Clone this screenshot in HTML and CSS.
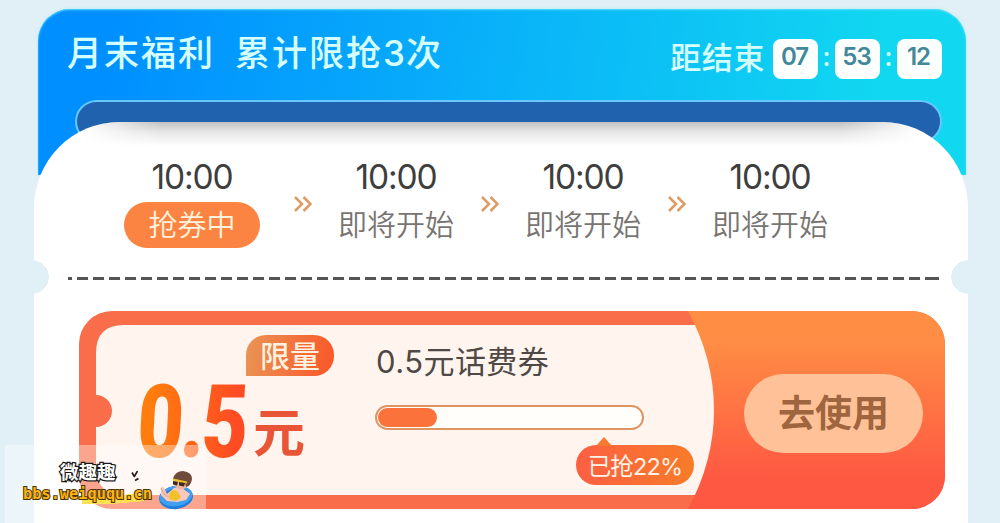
FILE: index.html
```html
<!DOCTYPE html>
<html lang="zh-CN">
<head>
<meta charset="utf-8">
<title>月末福利</title>
<link rel="stylesheet" href="styles.css">
</head>
<body>
<main class="promo">
  <header class="hero">
    <div class="hero-row">
      <h1 class="title"><span>月末福利</span><span>累计限抢<b class="num">3</b>次</span></h1>
      <div class="countdown">
        <span class="countdown-label">距结束</span>
        <span class="unit">07</span><span class="colon">:</span><span class="unit">53</span><span class="colon">:</span><span class="unit">12</span>
      </div>
    </div>
    <div class="slot"></div>
  </header>
  <section class="panel">
    <div class="sessions">
      <div class="session active"><time>10:00</time><span class="state">抢券中</span></div>
      <svg class="chevrons" viewBox="0 0 18 16"><path d="M1 1l7 7-7 7M9.500 1l7 7-7 7"/></svg>
      <div class="session"><time>10:00</time><span class="state">即将开始</span></div>
      <svg class="chevrons" viewBox="0 0 18 16"><path d="M1 1l7 7-7 7M9.500 1l7 7-7 7"/></svg>
      <div class="session"><time>10:00</time><span class="state">即将开始</span></div>
      <svg class="chevrons" viewBox="0 0 18 16"><path d="M1 1l7 7-7 7M9.500 1l7 7-7 7"/></svg>
      <div class="session"><time>10:00</time><span class="state">即将开始</span></div>
    </div>
    <div class="tear"></div>
    <article class="coupon">
      <svg class="coupon-bg" viewBox="0 0 866 198">
        <defs>
          <linearGradient id="act" x1="0" y1="0" x2="0" y2="1"><stop offset=".15" stop-color="#ff8d44"/><stop offset=".85" stop-color="#fe5842"/></linearGradient>
        </defs>
        <rect width="866" height="198" rx="33" fill="#f96d4a"/>
        <path d="M45 14H640V184H45Q17 184 17 156V116A16 16 0 0 0 17 84V42Q17 14 45 14Z" fill="#fff4ee"/>
        <path d="M609 0H833A33 33 0 0 1 866 33V165A33 33 0 0 1 833 198H609Q635 150 635 99Q635 48 609 0Z" fill="url(#act)"/>
      </svg>
      <div class="value">
        <span class="tag">限量</span>
        <div class="amount"><span class="figure">0.5</span><span class="yuan">元</span></div>
      </div>
      <div class="detail">
        <h2><span class="num">0.5</span>元话费券</h2>
        <div class="bar"><i style="width:22.500%"></i></div>
        <span class="sold">已抢<span class="num">22%</span></span>
      </div>
      <div class="action"><button>去使用</button></div>
    </article>
  </section>
</main>
<aside class="watermark">
  <div class="wm-text">
    <span class="wm-name">微趣趣</span>
    <span class="wm-url">bbs.weiququ.cn</span>
  </div>
  <svg class="wm-art" viewBox="0 0 66 42">
    <path d="M3 1.500l2 3.500M8.500 0l-3.500 6M6 9.500l3.500-2" fill="none" stroke="#2a1515" stroke-width="1.600"/>
    <g transform="rotate(-8 47 26)">
      <ellipse cx="47" cy="26.500" rx="17" ry="11.500" fill="#1f7fda"/>
      <ellipse cx="47" cy="25" rx="16.500" ry="10" fill="#3f9ff2"/>
      <ellipse cx="47" cy="22" rx="12" ry="4.500" fill="#2b7fd6"/>
    </g>
    <path d="M32 17q1-3 3 0l3 6 7-6q6-2 11 2l5 4-4 6-9 2-10-1-6-6Z" fill="#f8c9ba"/>
    <path d="M41 21q4-4 8 0l3 5-5 4-7-2Z" fill="#f2c02a"/>
    <path d="M32 17q3 8 8 9" fill="none" stroke="#e7a99b" stroke-width="1.200"/>
    <ellipse cx="52" cy="12" rx="7" ry="6.500" fill="#f2b5a0"/>
    <path d="M44 8Q46 0 54 0q9 1 9 8-1 7-6 8l-1-5-12-3Z" fill="#6f4b3d"/>
    <path d="M44 8.500l14 3" stroke="#f0bd22" stroke-width="2"/>
    <path d="M44 10l5 1-1 3.500-4-1ZM50 11l6 1-1 3.500-5-1Z" fill="#3a2b1a"/>
  </svg>
</aside>
</body>
</html>
```
FILE: styles.css
```css
* { box-sizing: border-box; }
body {
  margin: 0;
  width: 1000px;
  height: 523px;
  overflow: hidden;
  position: relative;
  background: #e1eff6;
  font-family: "Noto Sans CJK SC", sans-serif;
}
.num { font-family: Inter, sans-serif; font-weight: inherit; }
.promo { padding: 9px 32px 0 34px; }
.hero {
  height: 166px;
  margin: 0 2px 0 4px;
  border-radius: 32px 32px 0 0;
  background: linear-gradient(97deg, #008fff 8%, #08adfa 44%, #11d8f0 91%);
  box-shadow: 0 0 3px #a9edff, inset 0 1px 2px #5bdcff;
}
.hero-row {
  height: 93px;
  display: flex;
  justify-content: space-between;
  padding: 0 24px 0 29px;
}
.title {
  display: flex;
  gap: 20px;
  margin: 16px 0 0;
  font-size: 35px;
  line-height: 52px;
  letter-spacing: 2px;
  font-weight: 500;
  color: #d5ffff;
}
.title .num { margin-right: -1px; }
.countdown {
  display: flex;
  align-items: center;
  height: 40px;
  margin-top: 30px;
  color: #d5ffff;
}
.countdown-label { font-size: 31px; letter-spacing: .600px; margin-right: 8px; font-weight: 500; line-height: 40px; margin-top: -6px; }
.unit {
  width: 45px;
  height: 40px;
  border-radius: 8px;
  background: #fbfffe;
  color: #43879a;
  font: 600 24px/36px Inter, sans-serif;
  letter-spacing: -1px;
  text-indent: -2px;
  text-align: center;
}
.colon { width: 17px; text-align: center; font: 600 25px/34px "Noto Sans", sans-serif; height: 40px; }
.slot {
  height: 39px;
  margin: 0 26px 0 39px;
  border-radius: 20px;
  background: #2162af;
  box-shadow: 0 0 0 2px #66c8ff;
}
.panel {
  position: relative;
  overflow: hidden;
  height: 410px;
  margin-top: -53px;
  border-radius: 85px 85px 10px 10px / 86px 86px 10px 10px;
  background: radial-gradient(circle at -2px 155px, #e1eff6 16.500px, transparent 17px),
    radial-gradient(circle at 100% 155px, #e1eff6 16.500px, transparent 17px), #fff;
}
.panel::before {
  content: "";
  position: absolute;
  left: 30px;
  right: 30px;
  top: 0;
  height: 24px;
  background: linear-gradient(#c3c3c3, #e8e8e8 45%, #fff);
  -webkit-mask-image: linear-gradient(90deg, transparent 2%, #000 11%, #000 89%, transparent 98%);
  mask-image: linear-gradient(90deg, transparent 2%, #000 11%, #000 89%, transparent 98%);
}
.sessions {
  position: relative;
  display: grid;
  grid-template-columns: 145px 18px 120px 18px 120px 18px 120px;
  column-gap: 24.500px;
  padding: 36px 0 0 90px;
  height: 155px;
}
.session { display: flex; flex-direction: column; align-items: center; white-space: nowrap; }
.active { width: 136px; }
.session time {
  font: 400 33.500px/38px Inter, sans-serif;
  letter-spacing: -1.100px;
  color: #3e3e3e;
}
.state {
  margin-top: 6px;
  font-size: 29px;
  line-height: 43px;
  color: #777471;
  font-weight: 350;
}
.active .state {
  width: 136px;
  height: 46px;
  border-radius: 23px;
  background: #fb8442;
  color: #fff3df;
  text-align: center;
}
.chevrons { width: 18px; height: 16px; margin-top: 38px; fill: none; stroke: #df9b62; stroke-width: 2.500; }
.tear {
  height: 3px;
  margin: 0 29px 0 34px;
  background: repeating-linear-gradient(90deg, #555 0 11px, transparent 11px 16px) -7px 0;
}
.coupon {
  position: relative;
  display: grid;
  grid-template-columns: 297px 338px 1fr;
  width: 866px;
  height: 198px;
  margin: 31px 0 0 45px;
}
.coupon-bg { position: absolute; inset: 0; width: 866px; height: 198px; }
.value, .detail, .action { position: relative; }
.value { padding: 25px 0 0 59px; display: flex; flex-direction: column; }
.tag {
  width: 88px;
  height: 41px;
  margin: -1px 0 1px 108px;
  border-radius: 20px 20px 20px 0;
  background: linear-gradient(100deg, #e99555, #fa5528);
  color: #fff1df;
  font-size: 30px;
  line-height: 38px;
  font-weight: 500;
  text-align: center;
}
.amount { display: flex; height: 90px; white-space: nowrap; }
.figure {
  width: 150px;
  height: 100px;
  flex: none;
  font: 900 102px/100px Roboto, sans-serif;
  letter-spacing: -4px;
  transform: skewX(-3deg) scaleX(.785);
  transform-origin: 0 82%;
  margin: -5px 0 0 -2px;
  color: transparent;
  background: linear-gradient(90deg, #ff7d0c 10%, #ff4b24 85%);
  -webkit-background-clip: text;
  background-clip: text;
}
.yuan { margin-left: -33px; font-size: 52px; line-height: 70px; margin-top: 18px; font-weight: 700; color: #e95637; }
.detail { display: flex; flex-direction: column; align-items: flex-start; padding-top: 28px; }
.detail h2 { margin: 0; font-size: 31px; line-height: 42px; letter-spacing: .450px; font-weight: 400; color: #4e4945; white-space: nowrap; }
.bar {
  width: 269px;
  height: 25px;
  margin-top: 22px;
  margin-left: -1px;
  padding: 1px;
  border: 2px solid #df935f;
  border-radius: 13px;
  background: #fffefb;
}
.bar i { display: block; height: 100%; border-radius: 10px; background: #fb723b; }
.sold {
  position: relative;
  width: 118px;
  height: 40px;
  margin: 15px 0 0 200px;
  border-radius: 20px;
  background: linear-gradient(90deg, #fc5f43, #f77c28);
  color: #fff1e5;
  font-size: 23.500px;
  line-height: 40px;
  text-align: center;
  white-space: nowrap;
  letter-spacing: -.800px;
}
.sold::before {
  content: "";
  position: absolute;
  left: 20px;
  top: -8px;
  border: 8px solid transparent;
  border-top: 0;
  border-bottom: 9px solid #f77a30;
}
.action { padding: 63px 0 0 30px; }
.action button {
  display: block;
  width: 179px;
  height: 79px;
  padding: 0 0 4px;
  border: 0;
  border-radius: 40px;
  background: #ffc298;
  color: #9e653e;
  font: 700 37px/75px "Noto Sans CJK SC", sans-serif;
}
.watermark {
  position: absolute;
  left: 5px;
  top: 445px;
  width: 201px;
  height: 78px;
  background: rgba(255,255,255,.38);
}
.wm-text {
  display: flex;
  flex-direction: column;
  width: 150px;
  padding: 14px 0 0 18px;
}
.wm-name {
  margin-left: 37px;
  font-size: 18.500px;
  line-height: 24px;
  font-weight: 700;
  color: #fff;
  -webkit-text-stroke: 2.500px #181818;
  paint-order: stroke fill;
}
.wm-url {
  font: 700 15.300px/20px "DejaVu Sans Mono", monospace;
  color: #fbb414;
  -webkit-text-stroke: 2px #4a3508;
  paint-order: stroke fill;
  margin-top: 1px;
  background: linear-gradient(175deg, transparent 45%, #ffe052 47% 85%, transparent 87%) 59px 5px / 62px 15px no-repeat;
}
.wm-art { position: absolute; left: 124px; top: 26px; width: 66px; height: 42px; }
```
